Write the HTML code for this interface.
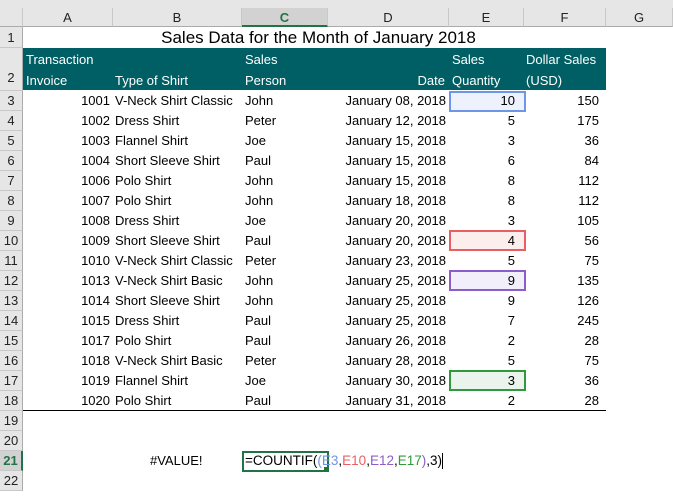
<!DOCTYPE html><html><head><style>
body{margin:0;width:673px;height:496px;overflow:hidden;background:#fff;font-family:"Liberation Sans",sans-serif;font-size:13px;color:#000;position:relative}
.a{position:absolute;white-space:nowrap}
.ch{position:absolute;top:8px;height:19px;background:#e6e6e6;border-right:1px solid #c8c8c8;border-bottom:1px solid #ababab;text-align:center;line-height:19px;font-size:13px;color:#222;box-sizing:border-box}
.rh{position:absolute;left:0;width:23px;background:#e6e6e6;border-bottom:1px solid #c8c8c8;border-right:1px solid #ababab;text-align:center;font-size:13px;color:#222;box-sizing:border-box}
.c{position:absolute;height:20px;line-height:20px;white-space:nowrap}
.r{text-align:right}
.box{position:absolute;left:449px;width:73px;height:17px;border:2px solid}
.h{position:absolute;width:5px;height:5px}
</style></head><body>
<div class="a" style="left:0;top:0;width:673px;height:8px;background:#e6e6e6"></div>
<div class="ch" style="left:0;width:23px"></div>
<div class="ch" style="left:23px;width:90px">A</div>
<div class="ch" style="left:113px;width:129px">B</div>
<div class="ch" style="left:242px;width:86px;background:#d2d2d2;color:#217346;font-weight:bold;border-bottom:2px solid #217346">C</div>
<div class="ch" style="left:328px;width:121px">D</div>
<div class="ch" style="left:449px;width:75px">E</div>
<div class="ch" style="left:524px;width:82px">F</div>
<div class="ch" style="left:606px;width:67px">G</div>
<div class="rh" style="top:27px;height:21px;line-height:21px">1</div>
<div class="rh" style="top:48px;height:43px;line-height:60px">2</div>
<div class="a" style="left:23px;top:48px;width:583px;height:42px;background:#005f64"></div>
<div class="a" style="left:23px;top:27px;width:583px;text-align:center;font-size:17px;line-height:21px;padding-left:4px">Sales Data for the Month of January 2018</div>
<div style="color:#fff;">
<div class="c" style="left:26px;top:50px">Transaction</div>
<div class="c" style="left:26px;top:71px">Invoice</div>
<div class="c" style="left:115px;top:71px">Type of Shirt</div>
<div class="c" style="left:245px;top:50px">Sales</div>
<div class="c" style="left:245px;top:71px">Person</div>
<div class="c r" style="left:328px;width:117px;top:71px">Date</div>
<div class="c" style="left:452px;top:50px">Sales</div>
<div class="c" style="left:452px;top:71px">Quantity</div>
<div class="c" style="left:526px;top:50px">Dollar Sales</div>
<div class="c" style="left:526px;top:71px">(USD)</div>
</div>
<div class="box" style="top:91px;border-color:#6e95e8;background:#eef2fc"></div>
<div class="box" style="top:230px;border-color:#e85f63;background:#fdeeee"></div>
<div class="box" style="top:270px;border-color:#8c5ccc;background:#f2eefa"></div>
<div class="box" style="top:370px;border-color:#2f9a3c;background:#eaf4ec"></div>
<div id="rows"></div>
<div class="a" style="left:23px;top:410px;width:583px;height:1px;background:#000"></div>
<div class="a" style="left:242px;top:451px;width:83px;height:17px;border:2px solid #217346"></div>
<div class="a" style="left:324px;top:467px;width:5px;height:5px;background:#217346"></div>
<div class="c" style="left:150px;top:451px">#VALUE!</div>
<div class="c" style="left:245px;top:451px;font-size:13.5px">=COUNTIF(<span style="color:#6e95e8">(E3</span>,<span style="color:#e85f63">E10</span>,<span style="color:#8c5ccc">E12</span>,<span style="color:#2f9a3c">E17</span><span style="color:#8c5ccc">)</span>,3)<span style="display:inline-block;width:1px;height:16px;background:#000;vertical-align:middle"></span></div>
<script>
var d=[[1001,"V-Neck Shirt Classic","John","January 08, 2018",10,150],[1002,"Dress Shirt","Peter","January 12, 2018",5,175],[1003,"Flannel Shirt","Joe","January 15, 2018",3,36],[1004,"Short Sleeve Shirt","Paul","January 15, 2018",6,84],[1006,"Polo Shirt","John","January 15, 2018",8,112],[1007,"Polo Shirt","John","January 18, 2018",8,112],[1008,"Dress Shirt","Joe","January 20, 2018",3,105],[1009,"Short Sleeve Shirt","Paul","January 20, 2018",4,56],[1010,"V-Neck Shirt Classic","Peter","January 23, 2018",5,75],[1013,"V-Neck Shirt Basic","John","January 25, 2018",9,135],[1014,"Short Sleeve Shirt","John","January 25, 2018",9,126],[1015,"Dress Shirt","Paul","January 25, 2018",7,245],[1017,"Polo Shirt","Paul","January 26, 2018",2,28],[1018,"V-Neck Shirt Basic","Peter","January 28, 2018",5,75],[1019,"Flannel Shirt","Joe","January 30, 2018",3,36],[1020,"Polo Shirt","Paul","January 31, 2018",2,28]];
var h="";
for(var i=0;i<20;i++){var t=91+i*20,n=i+3;
h+='<div class="rh" style="top:'+t+'px;height:20px;line-height:20px;'+(n==21?'background:#d2d2d2;color:#217346;font-weight:bold;border-right:2px solid #217346':'')+'">'+n+'</div>';
if(i<16){var r=d[i];
h+='<div class="c r" style="left:23px;width:87px;top:'+t+'px">'+r[0]+'</div>';
h+='<div class="c" style="left:115px;top:'+t+'px">'+r[1]+'</div>';
h+='<div class="c" style="left:245px;top:'+t+'px">'+r[2]+'</div>';
h+='<div class="c r" style="left:328px;width:118px;top:'+t+'px">'+r[3]+'</div>';
h+='<div class="c r" style="left:449px;width:66px;top:'+t+'px">'+r[4]+'</div>';
h+='<div class="c r" style="left:524px;width:75px;top:'+t+'px">'+r[5]+'</div>';}}
document.getElementById("rows").innerHTML=h;
</script>
</body></html>
